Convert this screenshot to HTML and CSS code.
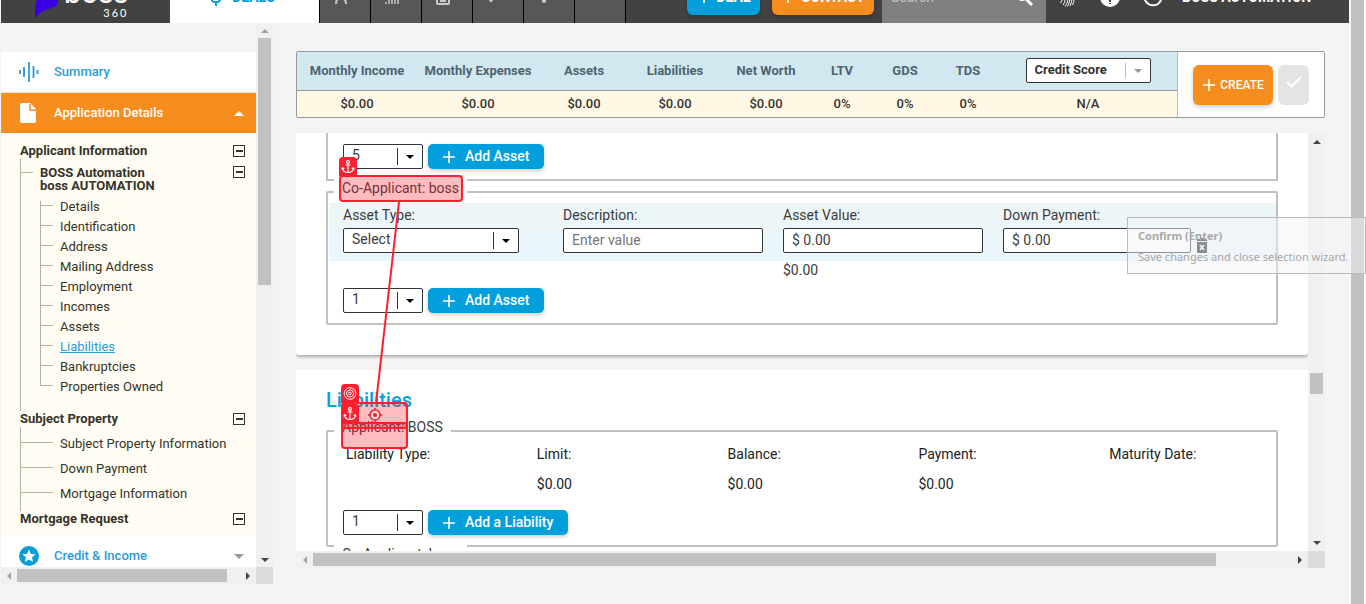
FILE: index.html
```html
<!DOCTYPE html>
<html lang="en">
<head>
<meta charset="utf-8">
<title>BOSS 360 - Application Details</title>
<link rel="stylesheet" href="styles.css">
</head>
<body>
<svg class="defs" aria-hidden="true">
  <symbol id="plus" viewBox="0 0 14 14"><path d="M7 1v12M1 7h12" fill="none" stroke="currentColor" stroke-width="1.600"/></symbol>
  <symbol id="anchor" viewBox="0 0 14 14"><g fill="none" stroke="currentColor" stroke-width="1.2"><circle cx="7" cy="2.4" r="1.4"/><path d="M7 4v9M4.500 5.500h5M1.500 8.500c.3 2.800 2.400 4.500 5.500 4.500s5.200-1.700 5.500-4.500M.8 10l.8-1.700 1.700.8M13.200 10l-.8-1.700-1.700.8"/></g></symbol>
  <symbol id="rings" viewBox="0 0 14 14"><g fill="none" stroke="currentColor"><circle cx="7" cy="7" r="5.800"/><circle cx="7" cy="7" r="3.500"/><circle cx="7" cy="7" r="1.300"/></g></symbol>
</svg>

<div class="app">
  <header class="topbar">
    <div class="bar">
      <a class="logo" href="#" aria-label="boss 360">
        <svg class="logo-mark" viewBox="0 0 23 34"><path d="M0 34V22C1 12 9 4 23 0v16c0 4-2 6-6 7C9 25 3 28 0 34z" fill="#3a00e5"/></svg>
        <span class="logo-text"><span class="logo-name">boss</span><span class="logo-num">360</span></span>
      </a>
      <a class="deals" href="#"><svg width="10" height="18" viewBox="0 0 10 18"><path d="M5 0v3M5 14v4M9 5C9 2 1 2 1 5.500S9 8 9 11.500 1 15 1 12" fill="none" stroke="currentColor" stroke-width="2"/></svg>DEALS</a>
      <nav class="tabs">
        <a href="#" aria-label="Contacts"><svg viewBox="0 0 16 16"><circle cx="8" cy="4" r="3"/><path d="M3 15c0-4 2-6 5-6s5 2 5 6"/></svg></a>
        <a href="#" aria-label="Reports"><svg viewBox="0 0 16 16"><path stroke-width="1.500" d="M2 13v2M5 10v5M8 7v8M11 4v11M14 1v14"/></svg></a>
        <a href="#" aria-label="Documents"><svg viewBox="0 0 16 16"><rect x="2" y="1" width="12" height="14" rx="1"/><path d="M5 8h6M5 12h6"/></svg></a>
        <a href="#" aria-label="Tasks"><svg viewBox="0 0 16 16"><path d="M1 8l4 4 4-4"/></svg></a>
        <a href="#" aria-label="Notes"><svg viewBox="0 0 16 16"><rect x="6" y="1" width="2" height="12" rx="1"/></svg></a>
        <a href="#" aria-label="More"><svg viewBox="0 0 16 16"><path d="M0 2l1 9"/></svg></a>
      </nav>
      <button class="btn btn-blue top-btn"><svg class="plus"><use href="#plus"/></svg>DEAL</button>
      <button class="btn btn-orange top-btn"><svg class="plus"><use href="#plus"/></svg>CONTACT</button>
      <label class="search"><input type="text" placeholder="Search" aria-label="Search"><svg viewBox="0 0 18 18"><circle cx="7" cy="7" r="5" fill="none" stroke="currentColor" stroke-width="2"/><path d="M11 11l6 6" stroke="currentColor" stroke-width="3"/></svg></label>
      <div class="tools">
        <svg viewBox="0 0 20 20" fill="none" stroke="#fff"><path d="M3 7c2-7 13-7 14 1 .3 4 0 7-1.500 10M2 13c2-2 1-5 2.500-7.500C7 1.500 15 3 15 9c0 4-.5 7-2 10M3.500 16C6 13 5 10 6.500 7.500 8.500 4.500 13 6 13 9.500c0 4-.8 7-2.500 10M6 18c2.500-3 1.700-6 2.500-8 .8-1.700 2.500-1 2.500 1 0 3-1 6-3 8.500"/></svg>
        <svg viewBox="0 0 20 20"><circle cx="10" cy="10" r="10" fill="#fff"/><path d="M10 4v8M10 13v4" stroke="#424242" stroke-width="2" stroke-dasharray="2 1"/></svg>
        <svg viewBox="0 0 20 20"><path d="M18 7a8.500 8.500 0 1 1-3-4" fill="none" stroke="#fff" stroke-width="2"/></svg>
      </div>
      <button class="user">BOSS AUTOMATION<svg width="8" height="5" viewBox="0 0 8 5"><path d="M0 0h8L4 5z" fill="currentColor"/></svg></button>
    </div>
  </header>

  <div class="body">
    <aside class="side">
      <div class="side-view">
        <a class="nav-item nav-summary" href="#">
          <svg width="20" height="20" viewBox="0 0 20 20"><path d="M1 8v4M5 5v10M10 0v20M14.500 4v12M18.500 8v4" stroke="#2b9bd8" stroke-width="1.800"/></svg>Summary</a>
        <a class="nav-item nav-active" href="#">
          <svg width="20" height="20" viewBox="0 0 20 20"><path d="M3 0h8l6 6v12a2 2 0 0 1-2 2H3a2 2 0 0 1-2-2V2a2 2 0 0 1 2-2z" fill="#fff"/><path d="M11 1v6h6" fill="none" stroke="#f78d1f" stroke-width="1.500"/></svg>Application Details<span class="caret caret-up"></span></a>
        <div class="tree">
          <div class="tree-head">Applicant Information<button aria-label="Collapse Applicant Information"></button></div>
          <div class="branch branch-person">
            <div class="person"><strong>BOSS Automation<br>boss AUTOMATION</strong><button aria-label="Collapse BOSS Automation"></button></div>
            <ul class="leafs">
              <li><a href="#">Details</a></li>
              <li><a href="#">Identification</a></li>
              <li><a href="#">Address</a></li>
              <li><a href="#">Mailing Address</a></li>
              <li><a href="#">Employment</a></li>
              <li><a href="#">Incomes</a></li>
              <li><a href="#">Assets</a></li>
              <li><a class="current" href="#">Liabilities</a></li>
              <li><a href="#">Bankruptcies</a></li>
              <li><a href="#">Properties Owned</a></li>
            </ul>
          </div>
          <div class="tree-head">Subject Property<button aria-label="Collapse Subject Property"></button></div>
          <ul class="branch wide-leafs">
            <li><a href="#">Subject Property Information</a></li>
            <li><a href="#">Down Payment</a></li>
            <li><a href="#">Mortgage Information</a></li>
          </ul>
          <div class="tree-head">Mortgage Request<button aria-label="Collapse Mortgage Request"></button></div>
        </div>
        <a class="nav-item" href="#">
          <svg width="20" height="20" viewBox="0 0 20 20"><circle cx="10" cy="10" r="10" fill="#079edb"/><path d="M10 3.500l1.900 4.400 4.700.4-3.600 3.100 1.100 4.700L10 13.600l-4.100 2.500L7 11.400 3.400 8.300l4.700-.4z" fill="#fff"/></svg>Credit &amp; Income<span class="caret caret-down"></span></a>
      </div>
      <div class="vbar"><i class="arrow up dim"></i><div class="track track-side-v"><b></b></div><i class="arrow down"></i></div>
      <div class="hbar"><i class="arrow left dim"></i><div class="track track-side-h"><b></b></div><i class="arrow right"></i></div>
      <div class="corner"></div>
    </aside>

    <main class="main">
      <section class="summary">
        <table class="totals">
          <colgroup><col class="c120"><col class="c122"><col class="c90"><col class="c92"><col class="c90"><col class="c62"><col class="c64"><col class="c62"><col></colgroup>
          <thead><tr><th>Monthly Income</th><th>Monthly Expenses</th><th>Assets</th><th>Liabilities</th><th>Net Worth</th><th>LTV</th><th>GDS</th><th>TDS</th><th><span class="pick pick-score"><select aria-label="Score"><option>Credit Score</option></select></span></th></tr></thead>
          <tbody><tr><td>$0.00</td><td>$0.00</td><td>$0.00</td><td>$0.00</td><td>$0.00</td><td>0%</td><td>0%</td><td>0%</td><td>N/A</td></tr></tbody>
        </table>
        <div class="actions">
          <button class="btn btn-orange create"><svg class="plus"><use href="#plus"/></svg>CREATE</button>
          <button class="confirm" aria-label="Confirm" disabled><svg width="16" height="12" viewBox="0 0 16 12"><path d="M1 6l4.500 4.500L15 1" fill="none" stroke="#fff" stroke-width="2"/></svg></button>
        </div>
      </section>

      <section class="panel">
        <div class="panel-view">
          <div class="card card-assets">
            <fieldset class="group group-cut">
              <div class="adder"><span class="pick pick-count"><select aria-label="Number of assets"><option>5</option></select></span><button class="btn btn-blue add"><svg class="plus"><use href="#plus"/></svg><span>Add Asset</span></button></div>
            </fieldset>
            <fieldset class="group">
              <legend>Co-Applicant: boss</legend>
              <div class="asset-row">
                <div class="field"><label for="type">Asset Type:</label><span class="pick pick-type"><select id="type"><option>Select</option></select></span></div>
                <div class="field"><label for="desc">Description:</label><input id="desc" class="text" type="text" placeholder="Enter value"></div>
                <div class="field"><label for="value">Asset Value:</label><input id="value" class="text" type="text" value="$ 0.00"></div>
                <div class="field field-last"><label for="down">Down Payment:</label><input id="down" class="text" type="text" value="$ 0.00"><button class="trash" aria-label="Delete asset"><svg width="10" height="15" viewBox="0 0 10 15"><path d="M0 1h3V0h4v1h3v2H0zM0 4h10v10a1 1 0 0 1-1 1H1a1 1 0 0 1-1-1z" fill="#222"/><path d="M3 7l4 5M7 7l-4 5" stroke="#fff" stroke-width="1.500"/></svg></button></div>
              </div>
              <div class="asset-total"><span>$0.00</span></div>
              <div class="adder"><span class="pick pick-count"><select aria-label="Number of co-applicant assets"><option>1</option></select></span><button class="btn btn-blue add"><svg class="plus"><use href="#plus"/></svg><span>Add Asset</span></button></div>
            </fieldset>
          </div>

          <div class="card card-liabilities">
            <h2>Liabilities</h2>
            <fieldset class="group">
              <legend>Applicant: BOSS</legend>
              <table class="liabilities">
                <thead><tr><th>Liability Type:</th><th>Limit:</th><th>Balance:</th><th>Payment:</th><th>Maturity Date:</th></tr></thead>
                <tbody><tr><td></td><td>$0.00</td><td>$0.00</td><td>$0.00</td><td></td></tr></tbody>
              </table>
              <div class="adder"><span class="pick pick-count"><select aria-label="Number of liabilities"><option>1</option></select></span><button class="btn btn-blue add"><svg class="plus"><use href="#plus"/></svg><span>Add a Liability</span></button></div>
            </fieldset>
            <fieldset class="group"><legend>Co-Applicant: boss</legend></fieldset>
          </div>
        </div>
        <div class="vbar"><i class="arrow up"></i><div class="track track-main-v"><b></b></div><i class="arrow down"></i></div>
        <div class="hbar"><i class="arrow left dim"></i><div class="track track-main-h"><b></b></div><i class="arrow right"></i></div>
        <div class="corner"></div>
      </section>
    </main>
  </div>
</div>
<div class="page-scroll"><b></b></div>

<div class="overlay">
  <svg class="link" width="1366" height="604"><path d="M399 202L376 403" stroke="#fb1f2f" stroke-width="2"/></svg>
  <div class="mark mark-anchor"></div>
  <div class="mark mark-target"></div>
  <div class="mark mark-label"></div>
  <svg class="tag tag-anchor"><use href="#anchor"/></svg>
  <svg class="tag tag-rings"><use href="#rings"/></svg>
  <svg class="tag tag-anchor2"><use href="#anchor"/></svg>
  <svg class="sight" width="14" height="14" viewBox="0 0 14 14"><circle cx="7" cy="7" r="5" fill="#fddfe1" stroke="#fb1f2f" stroke-width="1.500"/><circle cx="7" cy="7" r="2" fill="#fb1f2f"/><path d="M7 0v2M7 12v2M0 7h2M12 7h2" stroke="#fb1f2f" stroke-width="1.500"/></svg>
  <div class="tip" role="tooltip"><strong>Confirm (Enter)</strong><span>Save changes and close selection wizard.</span></div>
</div>
</body>
</html>
```
FILE: styles.css
```css
* { box-sizing: border-box; }
body {
  margin: 0;
  height: 100vh;
  display: flex;
  overflow: hidden;
  position: relative;
  padding-left: 1px;
  background: #f4f4f4;
  color: #3c3c3c;
  font: 14px/18px Roboto, "Liberation Sans", sans-serif;
}
.defs { position: absolute; width: 0; height: 0; }
button, input, select { font: inherit; color: inherit; margin: 0; }
button { border: 0; padding: 0; background: none; }
a { color: inherit; text-decoration: none; }
ul { list-style: none; margin: 0; padding: 0; }
.app { flex: 1; min-width: 0; display: flex; flex-direction: column; }

/* top bar, scrolled partly out of view */
.topbar { height: 23px; flex: none; display: flex; align-items: flex-end; overflow: hidden; background: #424242; }
.bar { flex: 1; height: 52px; display: flex; align-items: center; font-weight: 700; }
.logo { width: 169px; height: 52px; padding: 0 42px 4px 34px; display: flex; align-items: flex-end; gap: 6px; color: #fff; }
.logo-mark { width: 23px; height: 34px; flex: none; }
.logo-text { display: flex; flex-direction: column; align-items: flex-end; gap: 5px; }
.logo-name { font: 500 28px/18px Inter, sans-serif; }
.logo-num { font: 400 11px/12px Lato, sans-serif; letter-spacing: 2px; }
.deals { width: 149px; height: 52px; padding-right: 3px; display: flex; align-items: center; justify-content: center; gap: 11px; background: #fff; color: #079edb; }
.tabs { display: flex; width: 307px; border-right: 1px solid #000; }
.tabs a { flex: 1; height: 52px; display: flex; align-items: center; padding-left: 13px; border-left: 1px solid #000; background: #575757; }
.tabs svg { width: 16px; height: 16px; fill: none; stroke: #c8c8c8; stroke-width: 2; }
.btn { display: flex; align-items: center; justify-content: center; border-radius: 5px; color: #fff; box-shadow: 0 2px 4px rgba(0, 0, 0, .2); }
.btn-blue { background: #039fdc; }
.btn-orange { background: #f78d1f; }
.plus { width: 14px; height: 14px; flex: none; }
.top-btn { height: 36px; gap: 6px; border-radius: 6px; font-weight: 700; }
.top-btn.btn-blue { width: 73px; margin-left: 61px; }
.top-btn.btn-orange { width: 102px; margin-left: 12px; }
.search { width: 164px; height: 52px; margin-left: 8px; padding: 0 13px 0 7px; display: flex; align-items: center; background: #808080; color: #fff; }
.search input { flex: 1; min-width: 0; border: 0; background: none; font-weight: 400; }
.search input::placeholder { color: #c4c4c4; }
.search svg { width: 18px; height: 18px; }
.tools { display: flex; gap: 23px; margin-left: 11px; }
.tools svg { width: 20px; height: 24px; }
.user { margin-left: 19px; display: flex; align-items: center; gap: 8px; color: #fff; font-weight: 700; }

/* scroll bars */
.vbar, .hbar { display: flex; background: #f0f0f0; }
.vbar { flex-direction: column; padding: 0 2px; }
.hbar { padding: 2px 0; }
.arrow { flex: none; width: 17px; height: 17px; display: flex; align-items: center; justify-content: center; color: #444; }
.vbar .arrow { width: 13px; }
.hbar .arrow { height: 13px; }
.side .vbar .arrow { height: 15px; }
.side .hbar .arrow { width: 16px; }
.arrow::before { content: ""; border: 4px solid transparent; }
.arrow.up::before { border-top: 0; border-bottom-color: currentColor; }
.arrow.down::before { border-bottom: 0; border-top-color: currentColor; }
.arrow.left::before { border-left: 0; border-right-color: currentColor; }
.arrow.right::before { border-right: 0; border-left-color: currentColor; }
.dim { color: #a0a0a0; }
.track { flex: 1; display: grid; }
.track b { background: #c1c1c1; }
.track-side-v { grid-template-rows: 247fr 267fr; }
.track-side-h { grid-template-columns: 210fr 13fr; }
.track-main-v { grid-template-rows: 223fr 21fr 140fr; }
.track-main-v b { grid-row: 2; }
.track-main-h { grid-template-columns: 903fr 75fr; }
.corner { background: #dcdcdc; }
.page-scroll { flex: none; width: 17px; padding: 0 2px; display: flex; background: #f8f8f8; }
.page-scroll b { flex: 1; background: #c1c1c1; }

/* side navigation */
.body { flex: 1; min-height: 0; display: flex; gap: 23px; }
.side { flex: none; width: 272px; display: grid; grid-template: minmax(0, 1fr) 17px / 1fr 17px; margin-bottom: 20px; }
.side-view { overflow: hidden; padding-top: 29px; }
.nav-item { display: flex; align-items: center; gap: 15px; height: 40px; padding: 0 12px 0 18px; background: #fff; color: #2b9bd8; font-size: 13px; font-weight: 500; }
.nav-summary { border-bottom: 1px solid #e4e4e4; height: 41px; }
.nav-active { background: #f78d1f; color: #fff; height: 41px; border-bottom: 1px solid #f4f4f4; }
.caret { margin-left: auto; border: 5px solid transparent; }
.caret-up { border-top: 0; border-bottom-color: #fff; }
.caret-down { border-bottom: 0; border-top-color: #999; }
.tree { padding: 9px 11px 9px 19px; background: #fffdf3; color: #363327; font-size: 13px; line-height: 16px; }
.tree-head { display: flex; justify-content: space-between; align-items: center; height: 16px; font-weight: 700; }
.tree button { flex: none; width: 12px; height: 12px; border: 1px solid #363327; display: flex; align-items: center; justify-content: center; }
.tree button::before { content: ""; width: 7px; height: 2px; background: #363327; }
.branch { border-left: 1px solid #b7b29f; }
.branch-person { padding: 7px 0 14px 19px; }
.person { display: flex; justify-content: space-between; position: relative; line-height: 13px; margin-bottom: 5px; }
.person::before { content: ""; position: absolute; left: -19px; top: 6px; width: 12px; border-top: 1px solid #b7b29f; }
.leafs li { height: 20px; line-height: 20px; padding-left: 20px; position: relative; }
.leafs li::before { content: ""; position: absolute; left: 0; top: 0; height: 20px; border-left: 1px solid #b7b29f; }
.leafs li:first-child::before { top: 4px; height: 16px; }
.leafs li:last-child::before { height: 9px; }
.leafs li::after { content: ""; position: absolute; left: 0; top: 8px; width: 13px; border-top: 1px solid #b7b29f; }
.wide-leafs { padding: 4px 0 5px; }
.wide-leafs li { height: 25px; line-height: 25px; padding-left: 39px; position: relative; }
.wide-leafs li::after { content: ""; position: absolute; left: 0; top: 11px; width: 32px; border-top: 1px solid #b7b29f; }
.current { color: #2b9bd8; text-decoration: underline; }

/* totals strip */
.main { flex: 1; min-width: 0; display: flex; flex-direction: column; gap: 15px; padding: 28px 24px 36px 0; }
.summary { flex: none; display: flex; border: 1px solid #999; border-radius: 2px; background: #fff; }
.totals { flex: 1; table-layout: fixed; border-collapse: collapse; font-size: 13px; color: #333; }
.totals th, .totals td { padding: 0; text-align: center; font-weight: 500; }
.totals thead tr { height: 38px; background: #d2e8f0; color: #4d6470; border-bottom: 1px solid #999; }
.totals tbody tr { height: 27px; background: #fff8e4; }
.totals th { font-weight: 700; }
.c120 { width: 120px; }
.c122 { width: 122px; }
.c90 { width: 90px; }
.c92 { width: 92px; }
.c62 { width: 62px; }
.c64 { width: 64px; }
.actions { flex: none; width: 147px; display: flex; align-items: center; gap: 5px; padding-left: 15px; border-left: 1px solid #bbb; }
.create { width: 80px; height: 40px; gap: 4px; font-size: 12px; font-weight: 500; border-radius: 6px; }
.confirm { width: 31px; height: 40px; border-radius: 6px; background: #e4e4e4; padding-bottom: 4px; }

/* select boxes with a divided arrow */
.pick { position: relative; display: inline-block; height: 25px; vertical-align: top; }
.pick select { appearance: none; width: 100%; height: 25px; padding: 0 0 3px 8px; border: 1px solid #333; border-radius: 2px; background: #fff; text-align: left; line-height: 18px; }
.pick::before { content: ""; position: absolute; right: 25px; top: 4px; height: 17px; border-left: 1px solid #333; }
.pick::after { content: ""; position: absolute; right: 9px; top: 11px; border: 4px solid transparent; border-bottom: 0; border-top-color: #000; }
.pick-count { width: 80px; }
.pick-type { width: 176px; }
.pick-score { width: 125px; color: #333; font-weight: 700; }
.pick-score select { padding-bottom: 1px; }
.pick-score::before { top: 5px; height: 15px; border-color: #bbb; }
.pick-score::after { border-top-color: #999; }

/* scrolling form */
.panel { flex: 1; min-height: 0; display: grid; grid-template: minmax(0, 1fr) 17px / minmax(0, 1fr) 17px; }
.panel-view { overflow: hidden; }
.card { background: #fff; padding: 0 30px; border-radius: 0 0 3px 3px; }
.card-assets { padding-bottom: 30px; margin-bottom: 15px; box-shadow: 0 2px 3px rgba(0, 0, 0, .3); }
.card-liabilities { padding-top: 18px; }
h2 { margin: 0 0 6px; color: #079edb; font-size: 20px; line-height: 24px; font-weight: 500; }
.group { min-width: 0; margin: 0; padding: 0 0 10px 1px; border: 2px solid #c0c0c0; border-radius: 2px; }
.group + .group { margin-top: -2px; }
.group-cut { border-top: 0; padding-top: 11px; border-radius: 0; }
.group legend { margin-left: 5px; padding: 0 8px 8px; height: 26px; line-height: 18px; background: #fff; }
.adder { display: flex; gap: 5px; padding-left: 14px; }
.add { height: 25px; gap: 9px; padding: 0 15px 0 14px; font-weight: 500; }
.add span { padding-bottom: 2px; }
.asset-row { display: grid; grid-template-columns: repeat(4, minmax(0, 1fr)); margin-top: -2px; padding: 3px 53px 8px 14px; background: linear-gradient(#edf6f6, #eaf6fd); }
.field { display: flex; flex-direction: column; gap: 4px; }
.text { width: 200px; height: 25px; padding: 0 8px 2px; border: 1px solid #333; border-radius: 2px; background: #fff; }
.text::placeholder { color: #777; }
.field-last { display: grid; grid-template-columns: 188px 10px; column-gap: 6px; }
.field-last label { grid-column: 1 / 3; }
.field-last .text { width: 100%; }
.trash { height: 15px; align-self: end; }
.trash svg { display: block; }
.asset-total { display: grid; grid-template-columns: repeat(4, minmax(0, 1fr)); padding: 0 53px 9px 14px; }
.asset-total span { grid-column: 3; }
.liabilities { width: calc(100% + 7px); table-layout: fixed; border-collapse: collapse; margin: -5px 0 11px; color: #222; }
.liabilities th, .liabilities td { height: 30px; padding: 0 0 0 17px; text-align: left; font-weight: 400; }

/* selection wizard drawn over the page */
.overlay { position: absolute; inset: 0; overflow: hidden; pointer-events: none; }
.link { position: absolute; left: 0; top: 0; }
.mark { position: absolute; border: 2px solid #fb1f2f; border-radius: 4px; background: rgba(251, 31, 47, .3); }
.mark-anchor { left: 339px; top: 175px; width: 124px; height: 27px; }
.mark-target { left: 341px; top: 402px; width: 67px; height: 27px; }
.mark-label { left: 341px; top: 422px; width: 67px; height: 27px; }
.tag { position: absolute; width: 18px; height: 19px; padding: 2px; border-radius: 4px 4px 0 0; background: #fb1f2f; color: #fff; }
.tag-anchor { left: 339px; top: 157px; }
.tag-rings { left: 341px; top: 384px; }
.tag-anchor2 { left: 341px; top: 404px; }
.sight { position: absolute; left: 368px; top: 408px; }
.tip { position: absolute; right: 0; top: 217px; width: 239px; height: 57px; padding: 9px 0 0 10px; display: flex; flex-direction: column; gap: 3px; border: 1px solid #bbb; background: rgba(244, 244, 248, .5); color: #a8a8a8; font: 11px/18px "Noto Sans", sans-serif; white-space: nowrap; }
```
